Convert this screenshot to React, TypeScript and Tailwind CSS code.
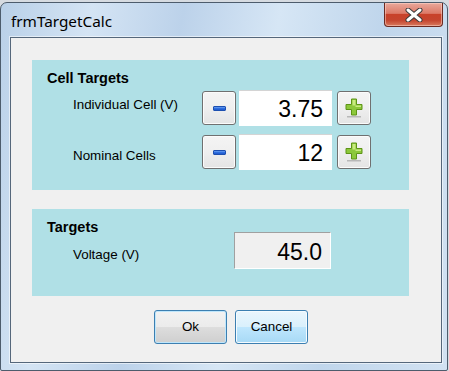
import React from "react";

const MinusButton = () => (
  <button className="flex h-[34px] w-[34px] items-center justify-center rounded-[3px] border border-[#707070] bg-[linear-gradient(to_bottom,#f4f4f4_0%,#efefef_50%,#e4e4e4_100%)] shadow-[inset_0_0_0_1px_#fbfbfb]">
    <span className="block h-[5px] w-[13px] rounded-[1px] border border-[#1d4fb0] bg-[linear-gradient(to_bottom,#6ea2f0_0%,#2f6ee0_50%,#1f57c8_100%)]" />
  </button>
);

const PlusButton = () => (
  <button className="flex h-[34px] w-[34px] items-center justify-center rounded-[3px] border border-[#707070] bg-[linear-gradient(to_bottom,#f4f4f4_0%,#efefef_50%,#e4e4e4_100%)] shadow-[inset_0_0_0_1px_#fbfbfb]">
    <svg width="18" height="21" viewBox="0 0 18 21">
      <rect x="2" y="18" width="14" height="1.5" fill="#b8b8b8" />
      <path
        d="M6.5 1h5v5.5h5.5v5h-5.5v5.5h-5v-5.5h-5.5v-5h5.5z"
        fill="#8cc83a"
        stroke="#5d9417"
        strokeWidth="1"
      />
      <path d="M7.5 2h3v5.5h5.5v1.5h-5.5v-1.5h-3z" fill="#c8ea80" />
    </svg>
  </button>
);

const Field = ({ value }: { value: string }) => (
  <div className="ml-[3px] h-[36px] w-[93px] overflow-hidden border-t border-[#d4d4d4] bg-white pr-[9px] text-right text-[23px] leading-[37px] text-black">
    {value}
  </div>
);

export default function App() {
  return (
    <div className="h-[371px] w-[449px] overflow-hidden bg-[#d6dbe1] pt-[2px] font-['Liberation_Sans',Arial,sans-serif]">
      <div className="flex h-[369px] w-[448px] flex-col rounded-t-[7px] rounded-b-[2px] border border-[#4d5c6c] bg-[linear-gradient(100deg,#b9d0e8_0%,#d4e4f4_18%,#bcd2ea_36%,#d6e6f5_55%,#c0d6ec_75%,#d2e2f2_100%)]">
        {/* title bar */}
        <div className="flex h-[34px] justify-between">
          <div className="pl-[10px] pt-[8px] font-['Noto_Sans',sans-serif] text-[15.3px] leading-[20px] text-black">
            frmTargetCalc
          </div>
          <div className="mr-[4px] flex h-[24px] w-[59px] items-center justify-center rounded-b-[4px] border border-t-0 border-[#6b2a22] bg-[linear-gradient(to_bottom,#e9a89b_0%,#dc7a68_45%,#c8412a_50%,#c5452f_75%,#d87a5e_100%)] shadow-[inset_0_0_0_1px_rgba(255,220,210,0.5)]">
            <svg width="18" height="14" viewBox="0 0 18 14">
              <path d="M3 2l12 10M15 2L3 12" stroke="#3a3a3a" strokeWidth="5" strokeLinecap="round" />
              <path d="M3 2l12 10M15 2L3 12" stroke="#ffffff" strokeWidth="3" strokeLinecap="round" />
            </svg>
          </div>
        </div>

        {/* client area */}
        <div className="ml-[9px] h-[326px] w-[432px] border border-[#55677b] bg-[#f0f0f0] pl-[21px] pt-[22px] shadow-[0_0_0_1px_rgba(255,255,255,0.55)]">
          <div className="h-[130px] w-[377px] bg-[#b0e0e6] pl-[15px] pt-[10px]">
            <div className="h-[16px] text-[14.5px] font-bold leading-[16px] text-black">Cell Targets</div>
            <div className="mt-[4px] flex flex-col gap-[8px] pl-[26px]">
              <div className="flex h-[36px] items-center">
                <div className="w-[129px] self-start pt-[7px] text-[13.4px] leading-[16px] text-black">
                  Individual Cell (V)
                </div>
                <MinusButton />
                <Field value="3.75" />
                <div className="ml-[5px]">
                  <PlusButton />
                </div>
              </div>
              <div className="flex h-[36px] items-center">
                <div className="w-[129px] self-start pt-[14px] text-[13.4px] leading-[16px] text-black">
                  Nominal Cells
                </div>
                <MinusButton />
                <Field value="12" />
                <div className="ml-[5px]">
                  <PlusButton />
                </div>
              </div>
            </div>
          </div>

          <div className="mt-[19px] h-[87px] w-[377px] bg-[#b0e0e6] pl-[15px] pt-[10px]">
            <div className="h-[13px] text-[14.5px] font-bold leading-[16px] text-black">Targets</div>
            <div className="flex items-start pl-[26px]">
              <div className="w-[161px] pt-[15px] text-[13.4px] leading-[16px] text-black">Voltage (V)</div>
              <div className="h-[37px] w-[97px] border border-[#a0a0a0] border-b-white border-r-white bg-[#f0f0f0] pr-[8px] text-right text-[23px] leading-[38px] text-black">
                45.0
              </div>
            </div>
          </div>

          <div className="ml-[122px] mt-[14px] flex gap-[8px]">
            <button className="h-[34px] w-[73px] rounded-[3px] border border-[#3c7fb1] bg-[linear-gradient(to_bottom,#f2f2f2_0%,#ebebeb_50%,#dddddd_51%,#cfcfcf_100%)] text-[13.4px] text-black shadow-[inset_0_0_0_1px_#bfe6fb]">
              Ok
            </button>
            <button className="h-[34px] w-[73px] rounded-[3px] border border-[#3c7fb1] bg-[linear-gradient(to_bottom,#eaf6fd_0%,#d9f0fc_50%,#bee6fd_51%,#a7d9f5_100%)] text-[13.4px] text-black shadow-[inset_0_0_0_1px_#f4fbff]">
              Cancel
            </button>
          </div>
        </div>
      </div>
    </div>
  );
}
